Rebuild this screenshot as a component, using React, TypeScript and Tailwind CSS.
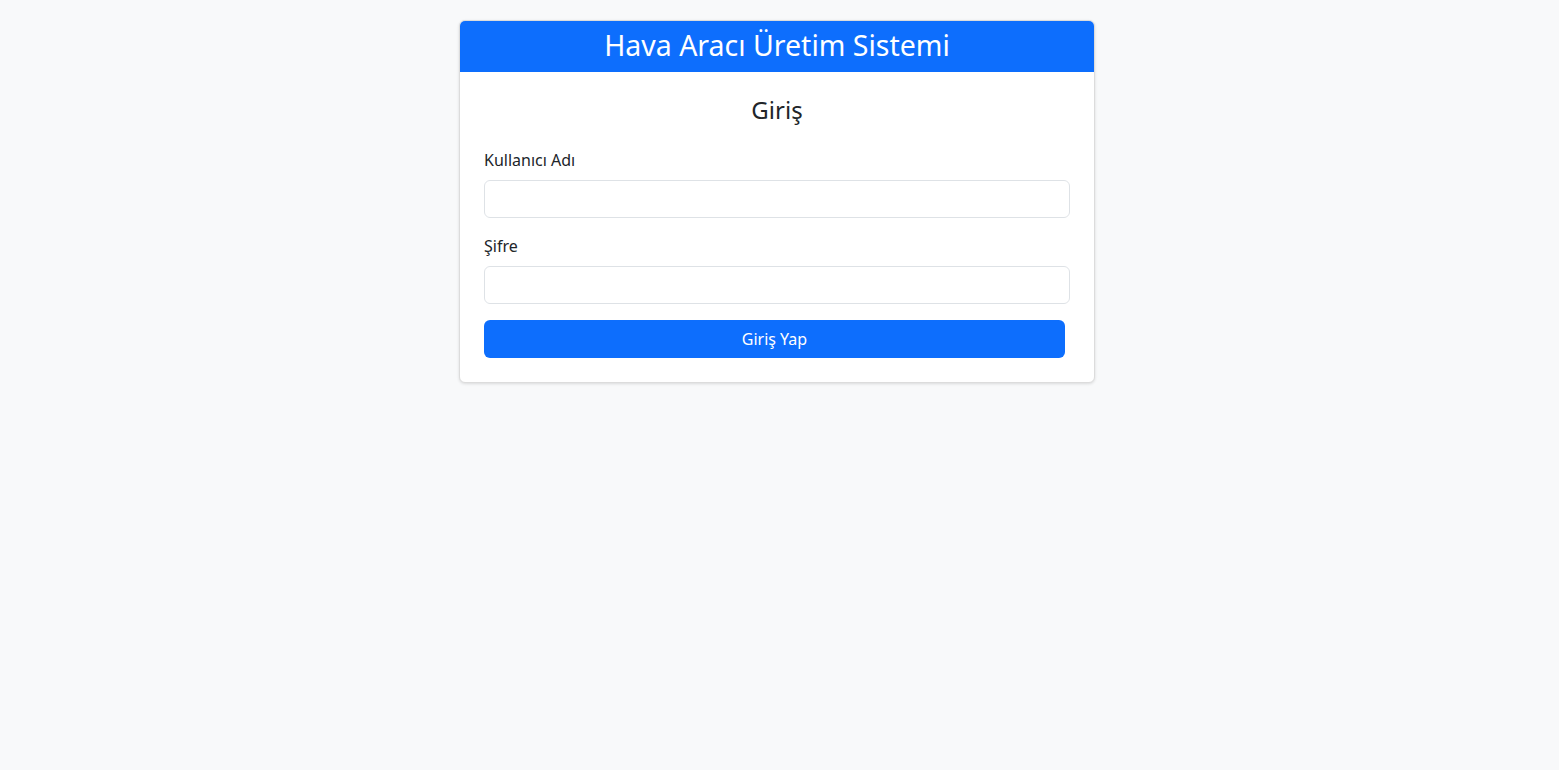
import React, { useState } from 'react';

const App: React.FC = () => {
  const [username, setUsername] = useState('');
  const [password, setPassword] = useState('');

  return (
    <div
      className="min-h-screen bg-[#f8f9fa] text-[#212529]"
      style={{ fontFamily: '"Noto Sans", "Open Sans", sans-serif' }}
    >
      <div className="flex justify-center pt-[20px] pr-[5px]">
        <div className="w-[636px] bg-white border border-[#dcdcdc] rounded-[6px] shadow-[0_1px_3px_rgba(0,0,0,0.12)] overflow-hidden">
          {/* Header */}
          <div className="bg-[#0d6efd] text-white text-center pt-[6px] pb-[8px]">
            <h2 className="text-[28.5px] leading-[37px] font-normal">Hava Aracı Üretim Sistemi</h2>
          </div>

          {/* Body */}
          <div className="p-[24px]">
            <h3 className="text-[24px] leading-[27px] text-center mb-[25px]">Giriş</h3>

            <form
              onSubmit={(e) => e.preventDefault()}
              className="flex flex-col"
            >
              <div className="mb-[16px]">
                <label className="block text-[16px] leading-[24px] mb-[8px]">Kullanıcı Adı</label>
                <input
                  type="text"
                  value={username}
                  onChange={(e) => setUsername(e.target.value)}
                  className="block w-full h-[38px] px-3 border border-[#dee2e6] rounded-[6px] bg-white outline-none"
                />
              </div>

              <div className="mb-[16px]">
                <label className="block text-[16px] leading-[24px] mb-[8px]">Şifre</label>
                <input
                  type="password"
                  value={password}
                  onChange={(e) => setPassword(e.target.value)}
                  className="block w-full h-[38px] px-3 border border-[#dee2e6] rounded-[6px] bg-white outline-none"
                />
              </div>

              <button
                type="submit"
                className="w-[581px] h-[38px] bg-[#0d6efd] text-white text-[16px] rounded-[6px]"
              >
                Giriş Yap
              </button>
            </form>
          </div>
        </div>
      </div>
    </div>
  );
};

export default App;
